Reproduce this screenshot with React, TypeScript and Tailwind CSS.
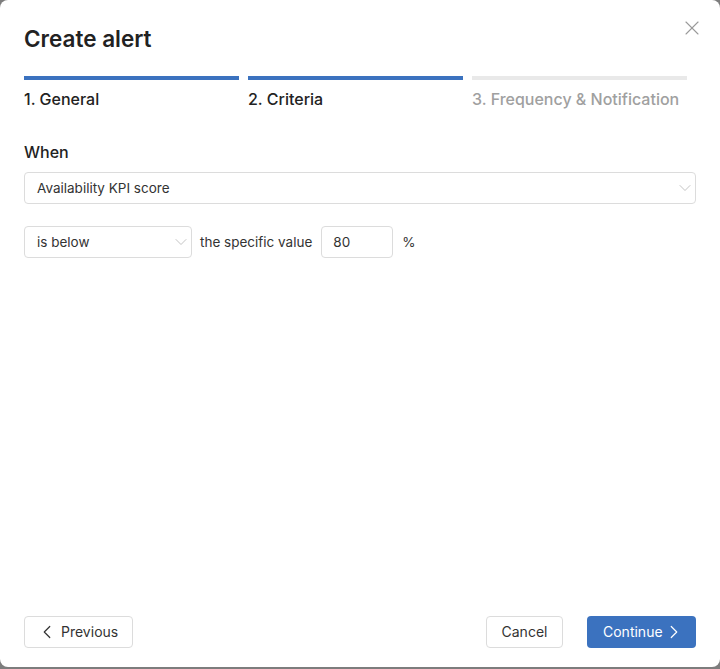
import { ChevronDown, ChevronLeft, ChevronRight, X } from "lucide-react";

const steps = [
    { label: "1. General", done: true },
    { label: "2. Criteria", done: true },
    { label: "3. Frequency & Notification", done: false },
];

const App = () => {
    return (
        <div className="h-[669px] w-[720px] bg-[#7d7d7d]" style={{ fontFamily: "Inter, 'Noto Sans', sans-serif" }}>
            <div className="relative flex h-[667px] flex-col rounded-lg bg-white px-6">
                <button className="absolute right-[16px] top-[16px] text-[#9a9a9a]">
                    <X size={24} strokeWidth={1.1} />
                </button>

                <h1 className="pt-[25px] text-[22.5px] font-semibold leading-[28px] text-[#222]">Create alert</h1>

                <div className="mt-[23px] grid grid-cols-3">
                    {steps.map((s) => (
                        <div key={s.label} className="pr-[9px]">
                            <div className={s.done ? "h-1 bg-[#3b72bf]" : "h-1 bg-[#e9e9e9]"} />
                            <div className={
                                s.done
                                    ? "mt-[8px] text-base font-medium leading-[22px] text-[#222]"
                                    : "mt-[8px] text-base font-medium leading-[22px] text-[#a0a0a0]"
                            }>
                                {s.label}
                            </div>
                        </div>
                    ))}
                </div>

                <div className="mt-[31px] text-base font-medium leading-[22px] text-[#222]">When</div>

                <div className="mt-[9px] flex h-8 items-center justify-between rounded border border-[#dcdcdc] pl-3 text-[13.5px] text-[#333]">
                    <span>Availability KPI score</span>
                    <ChevronDown size={20} strokeWidth={0.9} className="text-[#b0b0b0]" />
                </div>

                <div className="mt-[22px] flex items-center text-[13.5px] text-[#333]">
                    <div className="flex h-8 w-[168px] items-center justify-between rounded border border-[#dcdcdc] pl-3">
                        <span>is below</span>
                        <ChevronDown size={20} strokeWidth={0.9} className="text-[#b0b0b0]" />
                    </div>
                    <span className="ml-2">the specific value</span>
                    <div className="ml-[9px] flex h-8 w-[72px] items-center rounded border border-[#dcdcdc] pl-[11px]">80</div>
                    <span className="ml-[9px]">%</span>
                </div>

                <div className="mt-auto mb-[19px] flex items-center text-sm">
                    <button className="flex h-8 w-[109px] items-center gap-[3px] rounded-sm border border-[#dcdcdc] pl-[11px] text-[#333]">
                        <ChevronLeft size={22} strokeWidth={1.3} />
                        <span>Previous</span>
                    </button>
                    <button className="ml-auto flex h-8 w-[77px] items-center justify-center rounded-sm border border-[#dcdcdc] text-[#333]">
                        Cancel
                    </button>
                    <button className="ml-6 flex h-8 w-[109px] items-center rounded-sm bg-[#3b72bf] pl-4 text-white">
                        <span>Continue</span>
                        <ChevronRight size={22} strokeWidth={1.3} />
                    </button>
                </div>
            </div>
        </div>
    );
};

export default App;
